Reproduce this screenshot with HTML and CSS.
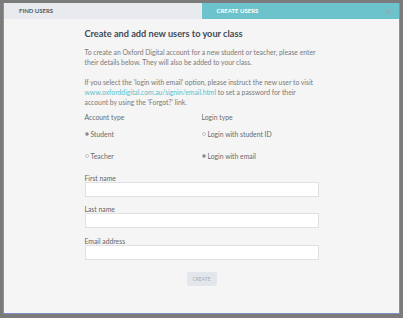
FILE: index.html
```html
<!DOCTYPE html>
<html lang="en">
<head>
    <meta charset="UTF-8">
    <meta name="viewport" content="width=device-width, initial-scale=1.0">
    <title>Create users</title>
    <link rel="stylesheet" href="styles.css">
</head>
<body>
    <div class="modal">
        <div class="tabs">
            <div class="tab">FIND USERS</div>
            <div class="tab active">CREATE USERS</div>
            <span class="close">&times;</span>
        </div>

        <div class="content">
            <h1>Create and add new users to your class</h1>

            <p>To create an Oxford Digital account for a new student or teacher, please enter their details below. They will also be added to your class.</p>

            <p>If you select the 'login with email' option, please instruct the new user to visit <a href="#">www.oxforddigital.com.au/signin/email.html</a> to set a password for their account by using the 'Forgot?' link.</p>

            <div class="options">
                <div class="option-title">Account type</div>
                <div class="option-title">Login type</div>
                <label class="radio"><span class="dot checked"></span>Student</label>
                <label class="radio"><span class="dot"></span>Login with student ID</label>
                <label class="radio"><span class="dot"></span>Teacher</label>
                <label class="radio"><span class="dot checked"></span>Login with email</label>
            </div>

            <div class="form-group">
                <label for="first-name">First name</label>
                <input type="text" id="first-name">
            </div>
            <div class="form-group">
                <label for="last-name">Last name</label>
                <input type="text" id="last-name">
            </div>
            <div class="form-group">
                <label for="email">Email address</label>
                <input type="email" id="email">
            </div>

            <div class="actions">
                <button type="button">CREATE</button>
            </div>
        </div>
    </div>
</body>
</html>
```

FILE: styles.css
```css
body {
    margin: 0;
    padding: 3px;
    background-color: #7b7b7b;
    font-family: Lato, 'Open Sans', sans-serif;
    color: #6b6b6b;
    height: 318px;
    box-sizing: border-box;
}

.modal {
    background-color: #f5f5f5;
    border: 1px solid #7e8fc4;
    border-top: none;
    height: 311px;
    box-sizing: border-box;
    display: flex;
    flex-direction: column;
}

.tabs {
    display: flex;
    height: 16px;
    position: relative;
}

.tab {
    flex: 1;
    background-color: #e8eaee;
    color: #555b63;
    font-size: 6px;
    font-weight: 700;
    line-height: 16px;
    padding-left: 15px;
}

.tab.active {
    background-color: #6cc3cb;
    color: #ffffff;
}

.close {
    position: absolute;
    right: 7px;
    top: 0;
    line-height: 16px;
    font-size: 13px;
    color: #9aa6ae;
}

.content {
    width: 234px;
    margin: 0 auto;
    padding-top: 9px;
}

h1 {
    font-size: 9.2px;
    line-height: 12px;
    font-weight: 700;
    color: #3f4a57;
    margin: 0 0 7px 0;
}

p {
    font-size: 6.8px;
    line-height: 10px;
    color: #7a7a7a;
    margin: 0 0 10px 0;
}

p a {
    color: #5cbfcc;
    text-decoration: none;
}

.options {
    display: grid;
    grid-template-columns: 117px 1fr;
    grid-template-rows: 10px 17px 22px;
    align-items: end;
    font-size: 6.8px;
    line-height: 10px;
    color: #6b6b6b;
    margin-top: -5px;
}

.radio {
    display: flex;
    align-items: center;
    gap: 2px;
}

.dot {
    width: 2px;
    height: 2px;
    border-radius: 50%;
    border: 1px solid #c4c4c4;
    background-color: #fff;
}

.dot.checked {
    background-color: #7d7d7d;
    border-color: #b0b0b0;
}

.form-group {
    margin-top: 9.5px;
}

.options + .form-group {
    margin-top: 13.5px;
}

.form-group label {
    display: block;
    font-size: 6.8px;
    color: #666;
    line-height: 7px;
}

.form-group input {
    display: block;
    width: 100%;
    height: 15px;
    box-sizing: border-box;
    border: 1px solid #dfe1e4;
    background-color: #fff;
    margin: 0;
    padding: 0 3px;
}

.actions {
    display: flex;
    justify-content: center;
    margin-top: 12px;
}

button {
    background-color: #e3e6ea;
    border: none;
    border-radius: 2px;
    color: #a9afb6;
    font-family: Lato, sans-serif;
    font-size: 5px;
    width: 30px;
    height: 14px;
    padding: 0;
}
```
